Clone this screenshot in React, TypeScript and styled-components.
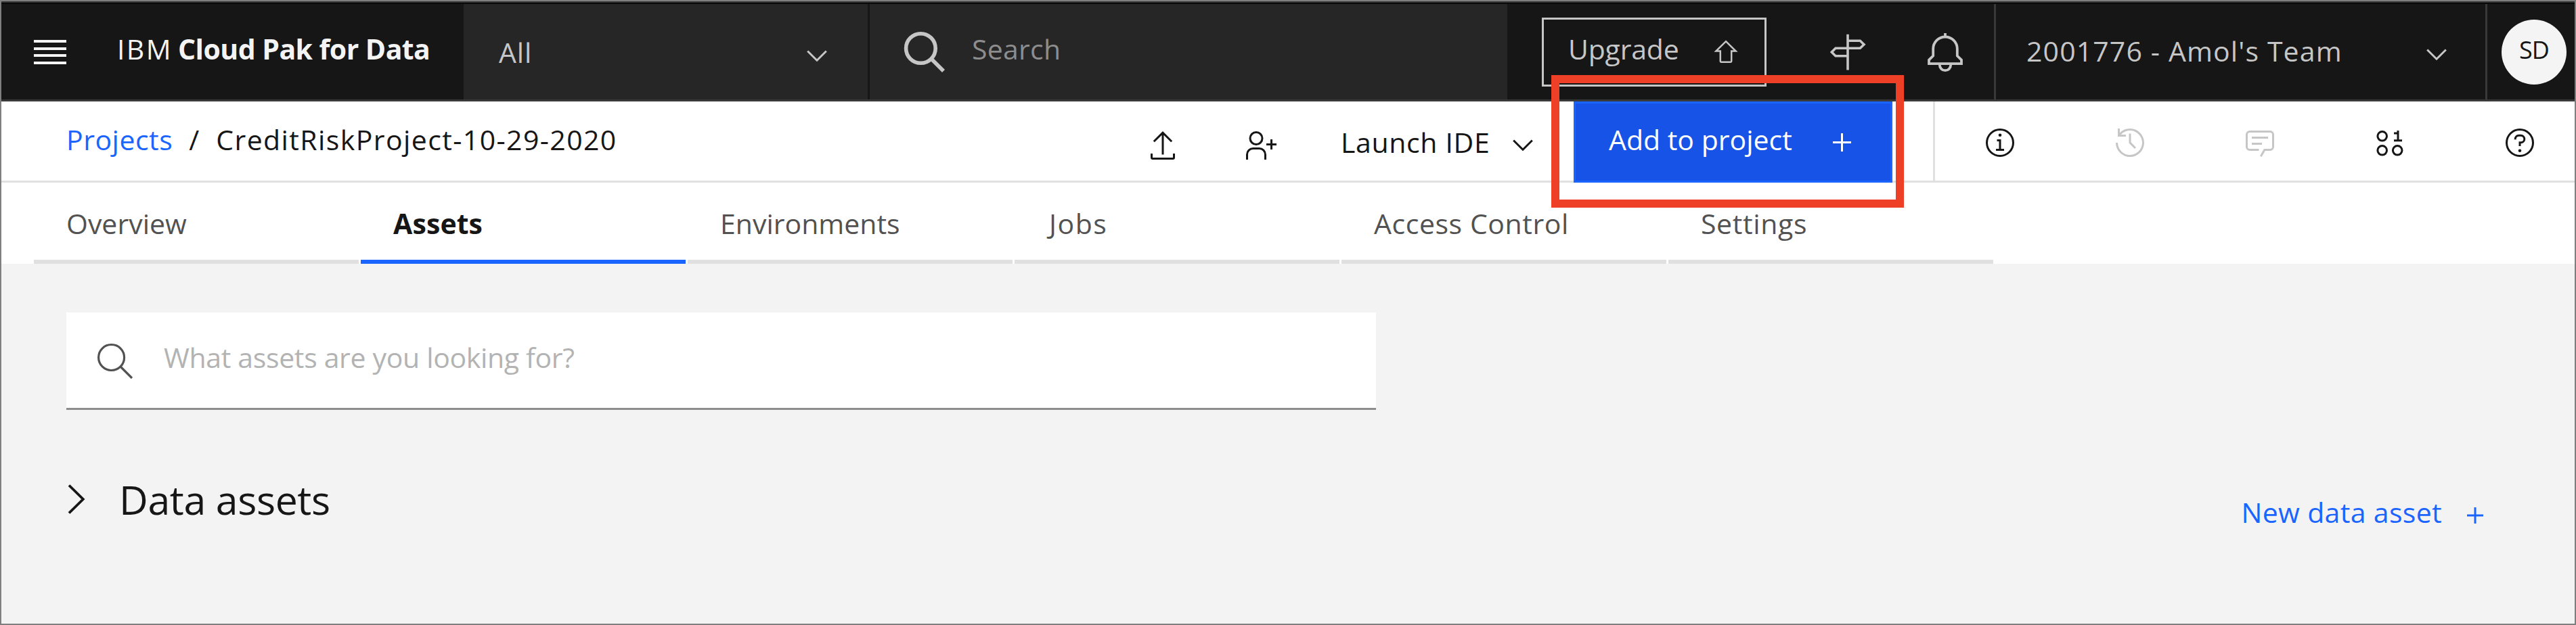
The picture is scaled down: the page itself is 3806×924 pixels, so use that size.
import React from "react";
import styled, { createGlobalStyle } from "styled-components";

const color = {
  ink: "#161616",
  panel: "#262626",
  line: "#393939",
  rule: "#e0e0e0",
  blue: "#1a64ff",
  blueDark: "#1853e8",
  light: "#c6c6c6",
  muted: "#8d8d8d",
  body: "#f3f3f3",
};

const GlobalStyle = createGlobalStyle`
  *, *::before, *::after { box-sizing: border-box; }
  body { margin: 0; }
  svg { display: block; flex: none; fill: none; stroke: currentColor; }
`;

const Frame = styled.div`
  position: relative;
  display: flex;
  flex-direction: column;
  width: 3806px;
  height: 924px;
  overflow: hidden;
  border: 2px solid #7f7f7f;
  background: ${color.body};
  color: ${color.ink};
  font-family: "Open Sans", "Noto Sans", sans-serif;
  font-size: 41px;
`;

const Label = styled.span<{ $track?: number; $lift?: number; $drop?: number; $indent?: number; $color?: string }>`
  padding-bottom: ${(p) => p.$lift ?? 0}px;
  padding-top: ${(p) => p.$drop ?? 0}px;
  padding-left: ${(p) => p.$indent ?? 0}px;
  letter-spacing: ${(p) => p.$track ?? 0}px;
  line-height: 56px;
  white-space: nowrap;
  color: ${(p) => p.$color ?? "inherit"};
`;

/* ---------- Header ---------- */

const TopEdge = styled.div`
  height: 4px;
  border-top: 2px solid #333;
  background: #0a0a0a;
`;

const Header = styled.header`
  display: grid;
  grid-template-columns: 683px 597px 945px 719px 1fr 132px;
  height: 144px;
  background: ${color.ink};
  border-bottom: 3px solid ${color.line};
  color: ${color.light};
`;

const HeaderCell = styled.div`
  display: flex;
  align-items: center;
`;

const Brand = styled(HeaderCell)`
  padding-left: 48px;
  color: #f4f4f4;
`;

const Burger = styled.div`
  display: flex;
  flex-direction: column;
  justify-content: space-between;
  width: 48px;
  height: 36px;
  margin: 1px 75px 0 0;
`;

const BurgerBar = styled.i`
  height: 4px;
  background: #f4f4f4;
`;

const BrandPrefix = styled(Label)`
  width: 90px;
`;

const BrandName = styled(Label)`
  font-weight: 700;
`;

const Scope = styled(HeaderCell)`
  justify-content: space-between;
  padding: 0 60px 0 52px;
  background: ${color.panel};
`;

const GlobalSearch = styled(HeaderCell)`
  gap: 36px;
  padding-left: 47px;
  border-left: 3px solid ${color.ink};
  background: ${color.panel};
`;

const Tools = styled(HeaderCell)`
  padding: 1px 0 0 51px;
`;

const UpgradeButton = styled.div`
  display: flex;
  align-items: center;
  justify-content: space-between;
  width: 332px;
  height: 102px;
  margin-right: 92px;
  padding: 0 39px 0 36px;
  border: 3px solid ${color.light};
`;

const BellSlot = styled.div`
  margin-left: 86px;
`;

const Team = styled(HeaderCell)`
  justify-content: space-between;
  padding: 0 57px 0 45px;
  border-left: 3px solid ${color.line};
`;

const Account = styled(HeaderCell)`
  padding: 1px 0 0 21px;
  border-left: 3px solid ${color.line};
`;

const Avatar = styled.div`
  display: flex;
  align-items: center;
  justify-content: center;
  width: 96px;
  height: 96px;
  border-radius: 50%;
  background: #f4f4f4;
  color: ${color.ink};
  font-size: 36px;
`;

/* ---------- Project toolbar ---------- */

const Toolbar = styled.div`
  display: grid;
  grid-template-columns: 1692px 144px 143px 344px 471px 60px 1fr;
  height: 120px;
  background: #fff;
  border-bottom: 3px solid ${color.rule};
`;

const Breadcrumb = styled.nav`
  display: flex;
  align-items: center;
  padding-left: 96px;
`;

const Slash = styled(Label)`
  margin: 0 25px 0 24px;
`;

const ToolIcon = styled.div`
  display: flex;
  align-items: center;
  padding-top: 9px;
`;

const LaunchMenu = styled.div`
  display: flex;
  align-items: center;
  justify-content: space-between;
  padding-right: 60px;
`;

const AddButton = styled.div`
  display: flex;
  align-items: center;
  justify-content: space-between;
  height: 120px;
  padding: 0 58px 0 49px;
  border: 3px solid ${color.blue};
  background: ${color.blueDark};
  color: #fff;
`;

const SideIcons = styled.div`
  grid-column: 7;
  display: flex;
  align-items: center;
  gap: 144px;
  padding: 1px 0 0 72px;
  border-left: 3px solid ${color.rule};
`;

/* ---------- Tabs ---------- */

const Tabs = styled.div`
  display: flex;
  gap: 3px;
  height: 120px;
  padding-left: 48px;
  background: #fff;
`;

const Tab = styled.div<{ $active: boolean }>`
  display: flex;
  align-items: center;
  width: 480px;
  padding: 5px 0 0 48px;
  border-bottom: 6px solid ${(p) => (p.$active ? color.blue : color.rule)};
  color: ${(p) => (p.$active ? color.ink : "#525252")};
  font-weight: ${(p) => (p.$active ? 700 : 400)};
`;

/* ---------- Body ---------- */

const Body = styled.main`
  flex: 1;
  padding: 72px 135px 0 96px;
`;

const AssetSearch = styled.div`
  display: flex;
  align-items: center;
  gap: 45px;
  width: 1935px;
  height: 144px;
  padding-left: 45px;
  background: #fff;
  border-bottom: 3px solid ${color.muted};
  color: #525252;
`;

const SearchGlyph = styled.svg`
  margin-top: 3px;
`;

const Section = styled.section`
  display: flex;
  align-items: center;
  height: 96px;
  margin-top: 84px;
`;

const SectionTitle = styled.h2`
  margin: 0 auto 0 48px;
  font-size: 59px;
  font-weight: 400;
  letter-spacing: -0.39px;
  line-height: 80px;
`;

const NewAsset = styled.div`
  display: flex;
  align-items: center;
  gap: 37px;
  padding-top: 38px;
  color: ${color.blue};
`;

const PlusSlot = styled.div`
  padding-top: 10px;
`;

const Highlight = styled.div`
  position: absolute;
  left: 2290px;
  top: 109px;
  width: 521px;
  height: 196px;
  border: 12px solid #ee4027;
`;

const ChevronSvg = styled.svg<{ $drop: number }>`
  margin-top: ${(p) => p.$drop}px;
`;

const Chevron = ({ drop }: { drop: number }) => (
  <ChevronSvg $drop={drop} width="30" height="17" strokeWidth="3">
    <path d="M1.2 1.5 15 15.2 28.8 1.5" />
  </ChevronSvg>
);

const Plus = ({ size }: { size: number }) => (
  <svg width={size} height={size} strokeWidth="3">
    <path d={`M0 ${size / 2}H${size}M${size / 2} 0V${size}`} />
  </svg>
);

const SideIcon = styled.svg.attrs({ width: 48, height: 48, viewBox: "0 0 48 48", strokeWidth: 3 })<{ $dim?: boolean }>`
  color: ${(p) => (p.$dim ? color.light : color.ink)};
`;

const SolidIcon = styled(SideIcon).attrs({ viewBox: "0 0 32 32" })`
  fill: currentColor;
  stroke: none;
`;

const tabs = [
  { name: "Overview", track: 0 },
  { name: "Assets", track: 0.11, active: true },
  { name: "Environments", track: 0 },
  { name: "Jobs", track: 1.5, indent: 3 },
  { name: "Access Control", track: 0.57 },
  { name: "Settings", track: 0.64 },
];

export default function App() {
  return (
    <Frame>
      <GlobalStyle />
      <TopEdge />
      <Header>
        <Brand>
          <Burger>
            <BurgerBar />
            <BurgerBar />
            <BurgerBar />
            <BurgerBar />
          </Burger>
          <BrandPrefix $track={2.4} $lift={9}>IBM</BrandPrefix>
          <BrandName $track={-0.56} $lift={9}>Cloud Pak for Data</BrandName>
        </Brand>
        <Scope>
          <Label $track={0.9} $drop={1}>All</Label>
          <Chevron drop={12} />
        </Scope>
        <GlobalSearch>
          <svg width="68" height="66" strokeWidth="5.6">
            <circle cx="28.4" cy="27.5" r="21.8" />
            <path d="M43 42 62 61" />
          </svg>
          <Label $track={0.26} $lift={9} $color={color.muted}>Search</Label>
        </GlobalSearch>
        <Tools>
          <UpgradeButton>
            <Label $track={-0.19} $lift={10}>Upgrade</Label>
            <svg width="36" height="36" strokeWidth="2.5">
              <path d="M18 2.2 32.6 16.6H26.2V31.6a1.2 1.2 0 0 1-1.2 1.2H11a1.2 1.2 0 0 1-1.2-1.2V16.6H3.4Z" />
            </svg>
          </UpgradeButton>
          <svg width="56" height="58" strokeWidth="3.6">
            <path d="M28 2.7V55.5M28 12.3H46.3L52 17.7 46.3 23.3H10L4.3 29 10 34.7H28" />
          </svg>
          <BellSlot>
            <svg width="60" height="62" strokeWidth="3.8">
              <path d="M30 3V8M12.2 36.5V26.3a17.8 17.8 0 0 1 35.6 0V36.5L54 42.6V48.2H6V42.6ZM21.8 50a8.2 8.2 0 0 0 16.4 0" />
            </svg>
          </BellSlot>
        </Tools>
        <Team>
          <Label $track={1.13} $lift={4}>2001776 - Amol's Team</Label>
          <Chevron drop={8} />
        </Team>
        <Account>
          <Avatar>
            <Label $track={-1} $lift={7}>SD</Label>
          </Avatar>
        </Account>
      </Header>

      <Toolbar>
        <Breadcrumb>
          <Label $track={0.5} $lift={9} $color={color.blue}>Projects</Label>
          <Slash $lift={9}>/</Slash>
          <Label $track={1.4} $lift={9}>CreditRiskProject-10-29-2020</Label>
        </Breadcrumb>
        <ToolIcon>
          <svg width="48" height="48" strokeWidth="3">
            <path d="M10.8 18.3 24 5.1 37.2 18.3M24 5V37.5M7.5 36v6a1.5 1.5 0 0 0 1.5 1.5h30a1.5 1.5 0 0 0 1.5-1.5v-6" />
          </svg>
        </ToolIcon>
        <ToolIcon>
          <svg width="48" height="48" strokeWidth="3">
            <circle cx="18" cy="13.5" r="9" />
            <path d="M4.5 45V37.5a9 9 0 0 1 9-9h9a9 9 0 0 1 9 9V45M33 22.5h15M40.5 15v15" />
          </svg>
        </ToolIcon>
        <LaunchMenu>
          <Label $track={0.65}>Launch IDE</Label>
          <Chevron drop={9} />
        </LaunchMenu>
        <AddButton>
          <Label $lift={8}>Add to project</Label>
          <Plus size={27} />
        </AddButton>
        <SideIcons>
          <SideIcon>
            <circle cx="24" cy="24" r="19.5" />
            <circle cx="24" cy="12.8" r="2.3" fill="currentColor" stroke="none" />
            <path d="M19.5 20.5H24V34.5M18 34.5H30" />
          </SideIcon>
          <SolidIcon $dim>
            <path d="M20.59 22 15 16.41V7h2v8.58l5 5.01zM16 2A13.94 13.94 0 0 0 6 6.23V2H4v8h8V8H7.08A12 12 0 1 1 4 16H2A14 14 0 1 0 16 2Z" />
          </SolidIcon>
          <SolidIcon $dim>
            <path d="M17.74 30 16 29l4-7h6a2 2 0 0 0 2-2V8a2 2 0 0 0-2-2H6a2 2 0 0 0-2 2v12a2 2 0 0 0 2 2h9v2H6a4 4 0 0 1-4-4V8a4 4 0 0 1 4-4h20a4 4 0 0 1 4 4v12a4 4 0 0 1-4 4h-4.84zM8 10h16v2H8zM8 16h10v2H8z" />
          </SolidIcon>
          <SideIcon>
            <circle cx="12.7" cy="14.3" r="6.8" />
            <circle cx="12.7" cy="35.3" r="6.8" />
            <circle cx="35.2" cy="35.3" r="6.8" />
            <path d="M30 20.8h12M36 6v14.8M30 10h6" />
          </SideIcon>
          <SideIcon>
            <circle cx="24" cy="24" r="19.5" />
            <path d="M17.2 19.3v-.8a5.3 5.3 0 0 1 5.3-5.3h3a5.3 5.3 0 0 1 0 10.6H24V29" />
            <circle cx="24" cy="35.7" r="2.3" fill="currentColor" stroke="none" />
          </SideIcon>
        </SideIcons>
      </Toolbar>

      <Tabs>
        {tabs.map((t) => (
          <Tab key={t.name} $active={!!t.active}>
            <Label $track={t.track} $indent={t.indent}>{t.name}</Label>
          </Tab>
        ))}
      </Tabs>

      <Body>
        <AssetSearch>
          <SearchGlyph width="54" height="54" strokeWidth="3.2">
            <circle cx="21.6" cy="21.5" r="19" />
            <path d="M35 35 52 52" />
          </SearchGlyph>
          <Label $track={-0.34} $lift={9} $color="#b3b3b3">What assets are you looking for?</Label>
        </AssetSearch>
        <Section>
          <svg width="30" height="46" strokeWidth="3.8">
            <path d="M4 2.5 24.8 23 4 43.5" />
          </svg>
          <SectionTitle>Data assets</SectionTitle>
          <NewAsset>
            <Label $track={0.34}>New data asset</Label>
            <PlusSlot>
              <Plus size={24} />
            </PlusSlot>
          </NewAsset>
        </Section>
      </Body>
      <Highlight />
    </Frame>
  );
}
